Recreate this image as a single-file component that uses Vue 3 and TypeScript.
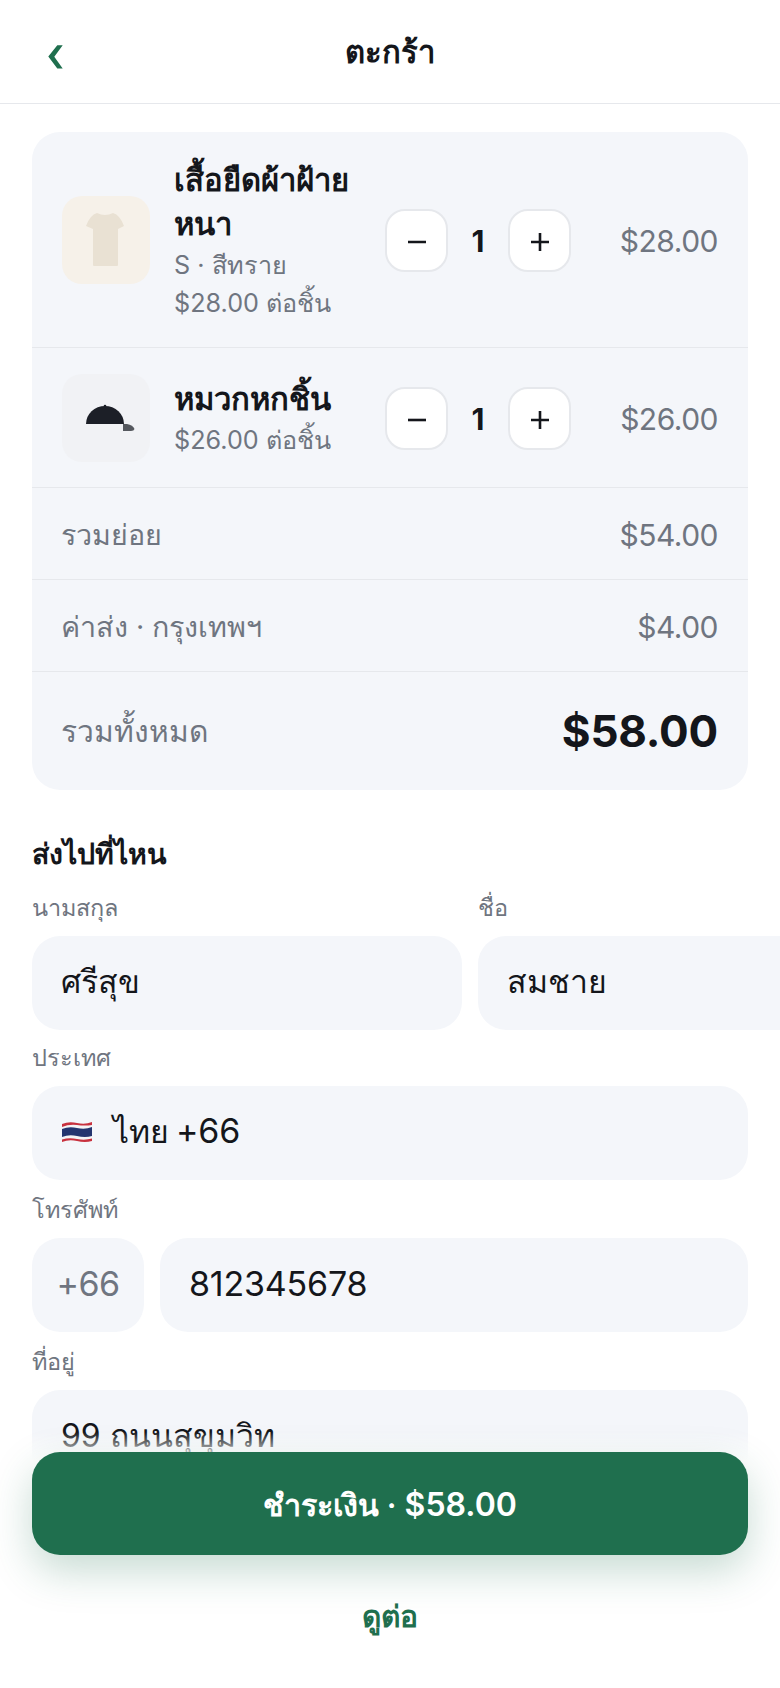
<script setup lang="ts">
interface CartItem {
  name: string;
  meta: string[];
  price: string;
  thumb: string;
}
const items: CartItem[] = [
  { name: "เสื้อยืดผ้าฝ้ายหนา", meta: ["S · สีทราย", "$28.00 ต่อชิ้น"], price: "$28.00", thumb: "shirt" },
  { name: "หมวกหกชิ้น", meta: ["$26.00 ต่อชิ้น"], price: "$26.00", thumb: "cap" },
];
</script>

<template>
  <div class="page">
    <header class="top">
      <svg class="back" width="16" height="24" viewBox="0 0 16 24">
        <path d="M9.3 0.2 H14.7 L6.3 11.8 L14.7 23.5 H9.3 L0.3 11.4 Z" fill="#1f6f4e" />
      </svg>
      <h1>ตะกร้า</h1>
    </header>

    <main class="content">
      <section class="card">
        <div v-for="item in items" :key="item.name" class="item">
          <div class="thumb" :class="item.thumb">
            <svg width="88" height="88" viewBox="0 0 88 88">
              <path
                v-if="item.thumb === 'shirt'"
                transform="translate(24 16)"
                d="M11 1 Q19 5 27 1 Q34 3 38 14 L32 17 V53 Q32 54 31 54 H8 Q7 54 7 53 V17 L0 14 Q4 3 11 1 Z"
                fill="#e9e1d3"
              />
              <template v-else>
                <path d="M24 50 A19 18 0 0 1 62 50 Z" fill="#1c1f27" />
                <circle cx="43" cy="32" r="1.3" fill="#1c1f27" />
                <path d="M61 50 H65 Q71 51 72.5 55 Q72 57 69 57 H61 Z" fill="#55585e" />
              </template>
            </svg>
          </div>
          <div class="info">
            <div class="name">{{ item.name }}</div>
            <div v-for="m in item.meta" :key="m" class="meta">{{ m }}</div>
          </div>
          <div class="stepper">
            <button>
              <svg width="20" height="20" viewBox="0 0 20 20"><path d="M1 10 H19" stroke="#14161b" stroke-width="2.6" /></svg>
            </button>
            <span class="qty">1</span>
            <button>
              <svg width="20" height="20" viewBox="0 0 20 20"><path d="M1 10 H19 M10 1 V19" stroke="#14161b" stroke-width="2.6" /></svg>
            </button>
          </div>
          <div class="price">{{ item.price }}</div>
        </div>
        <div class="sum"><span class="sum-label">รวมย่อย</span><span class="amount">$54.00</span></div>
        <div class="sum"><span class="sum-label">ค่าส่ง · กรุงเทพฯ</span><span class="amount">$4.00</span></div>
        <div class="sum total"><span>รวมทั้งหมด</span><strong>$58.00</strong></div>
      </section>

      <h2>ส่งไปที่ไหน</h2>
      <div class="names">
        <div class="col">
          <label>นามสกุล</label>
          <div class="field">ศรีสุข</div>
        </div>
        <div class="col">
          <label>ชื่อ</label>
          <div class="field">สมชาย</div>
        </div>
      </div>
      <label>ประเทศ</label>
      <div class="field country">
        <svg class="flag" width="32" height="24" viewBox="0 0 32 24">
          <path d="M1 4 Q8 1 16 3 T31 2 V21 Q24 23 16 21 T1 22 Z" fill="#f4f4f6" />
          <path d="M1 9 Q8 6 16 8 T31 7 V16 Q24 18 16 16 T1 17 Z" fill="#24356f" />
          <path d="M1 4 Q8 1 16 3 T31 2 V5 Q24 6 16 5 T1 7 Z" fill="#c8313e" />
          <path d="M1 19.5 Q8 17.5 16 19 T31 18.5 V21 Q24 23 16 21 T1 22 Z" fill="#c8313e" />
        </svg>
        <span class="country-name">ไทย <span class="latin">+66</span></span>
      </div>
      <label>โทรศัพท์</label>
      <div class="phone">
        <div class="field code latin">+66</div>
        <div class="field number latin">812345678</div>
      </div>
      <label>ที่อยู่</label>
      <div class="field address">99 ถนนสุขุมวิท</div>
    </main>

    <footer class="bottom">
      <button class="pay"><span class="pay-thai">ชำระเงิน ·</span> $58.00</button>
      <button class="more">ดูต่อ</button>
    </footer>
  </div>
</template>

<style>
html,
body {
  margin: 0;
  background: #fff;
}
</style>

<style scoped>
.page {
  position: relative;
  width: 780px;
  height: 1688px;
  overflow: hidden;
  background: #fff;
  color: #14161b;
  font-family: Inter, "Noto Sans", "DejaVu Sans", sans-serif;
}
.top {
  position: relative;
  height: 103px;
  border-bottom: 1px solid #e6e8ec;
  display: flex;
  align-items: center;
  justify-content: center;
}
.back {
  position: absolute;
  left: 48px;
  top: 45px;
}
h1 {
  margin: 0;
  font-size: 31px;
  font-weight: 700;
}
.content {
  padding: 28px 32px 0;
}
.card {
  background: #f4f6fa;
  border-radius: 28px;
  overflow: hidden;
}
.item {
  display: flex;
  align-items: center;
  gap: 24px;
  padding: 26px 30px 25px;
  border-bottom: 1px solid #e6e8ec;
}
.thumb {
  flex: none;
  width: 88px;
  height: 88px;
  border-radius: 20px;
}
.thumb svg {
  display: block;
}
.thumb.shirt {
  background: #f6f1e9;
}
.thumb.cap {
  background: #f1f2f5;
}
.info {
  flex: 1;
  min-width: 0;
}
.name {
  font-size: 31px;
  line-height: 44px;
  font-weight: 700;
}
.meta {
  font-size: 25.2px;
  line-height: 38px;
  color: #6f7580;
}
.stepper {
  flex: none;
  display: flex;
  align-items: center;
}
.stepper button {
  width: 63px;
  height: 63px;
  padding: 0;
  border: 2px solid #e6e8ec;
  border-radius: 20px;
  background: #fff;
  display: flex;
  align-items: center;
  justify-content: center;
}
.stepper svg {
  margin-top: 4px;
}
.qty {
  width: 60px;
  padding-top: 2px;
  text-align: center;
  font-size: 30px;
  font-weight: 700;
}
.price {
  flex: none;
  width: 123px;
  padding-top: 2px;
  text-align: right;
  font-size: 30px;
  letter-spacing: -0.5px;
  color: #6f7580;
}
.sum {
  display: flex;
  align-items: center;
  justify-content: space-between;
  box-sizing: border-box;
  height: 92px;
  padding: 2px 30px 0 29px;
  border-bottom: 1px solid #e6e8ec;
  font-size: 30px;
  color: #6f7580;
}
.sum-label {
  font-size: 28.7px;
}
.amount {
  letter-spacing: -0.5px;
}
.sum.total {
  height: 118px;
  padding-top: 0;
  border-bottom: 0;
}
.total strong {
  font-size: 44px;
  font-weight: 700;
  letter-spacing: -0.2px;
  color: #14161b;
}
h2 {
  margin: 42px 0 0;
  font-size: 28.5px;
  line-height: 44px;
  font-weight: 700;
}
.names {
  display: flex;
  gap: 16px;
  width: 876px;
  margin-bottom: -2px;
}
.col {
  flex: none;
  width: 430px;
}
label {
  display: block;
  font-size: 23.5px;
  line-height: 38px;
  margin-top: 11px;
  margin-bottom: 9px;
  color: #6f7580;
}
.col label {
  margin-top: 13px;
  margin-bottom: 9px;
}
.field {
  height: 94px;
  box-sizing: border-box;
  padding: 0 29px 3px;
  border-radius: 28px;
  background: #f4f6fa;
  font-size: 32px;
  display: flex;
  align-items: center;
}
.latin {
  font-size: 34px;
  letter-spacing: -0.2px;
}
.country {
  gap: 20px;
}
.country-name {
  word-spacing: -2px;
}
.phone {
  display: flex;
  gap: 16px;
}
.code {
  flex: none;
  width: 112px;
  justify-content: center;
  padding: 0 0 3px;
  letter-spacing: -0.5px;
  color: #6f7580;
}
.number {
  flex: 1;
}
.bottom {
  position: absolute;
  left: 0;
  right: 0;
  bottom: 0;
  padding: 20px 32px 0;
  height: 256px;
  box-sizing: border-box;
  display: flex;
  flex-direction: column;
  align-items: center;
  background: linear-gradient(to bottom, rgba(255, 255, 255, 0), #fff 28px);
}
.pay {
  width: 100%;
  height: 103px;
  flex: none;
  padding: 2px 0 0;
  border: 0;
  border-radius: 28px;
  background: #1f6f4e;
  color: #fff;
  font: 600 32px Inter, "Noto Sans", "DejaVu Sans", sans-serif;
  box-shadow: 0 16px 40px rgba(31, 111, 78, 0.25);
}
.pay-thai {
  font-size: 30.4px;
}
.more {
  margin-top: 38px;
  border: 0;
  padding: 0;
  background: none;
  color: #1f6f4e;
  font: 700 30px Inter, "Noto Sans", "DejaVu Sans", sans-serif;
}
</style>
